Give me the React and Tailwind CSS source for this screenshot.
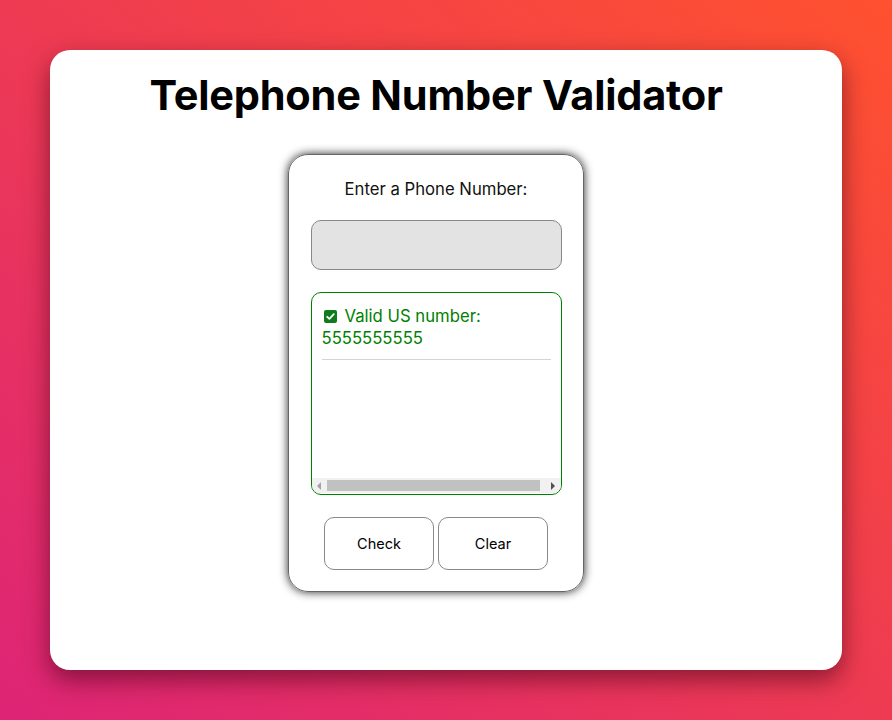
import React from "react";

export default function App() {
  return (
    <div
      className="w-[892px] h-[720px] bg-[linear-gradient(to_top_right,#DD2476,#FF512F)] pt-[50px] px-[50px]"
      style={{ fontFamily: "Inter, 'Noto Sans', sans-serif" }}
    >
      <div className="h-[620px] bg-white rounded-[20px] shadow-[0_10px_25px_rgba(60,0,20,0.55)] flex flex-col items-center pr-[20px]">
        <h1 className="mt-[20px] text-[41.5px] font-bold leading-[50px] text-black tracking-[-0.2px]">
          Telephone Number Validator
        </h1>
        <div className="mt-[34px] w-[296px] h-[438px] rounded-[20px] border border-[#666] shadow-[0_0_10px_rgba(0,0,0,0.85)] flex flex-col items-center">
          <label className="mt-[24px] text-[16.7px] leading-[20px] text-[#111]">
            Enter a Phone Number:
          </label>
          <input
            className="mt-[21px] w-[251px] h-[50px] bg-[#e3e3e3] border border-[#888] rounded-[10px] outline-none"
          />
          <div className="mt-[22px] w-[251px] h-[203px] border border-[#008000] rounded-[10px] flex flex-col overflow-hidden">
            <div className="flex-1 pt-[12px] px-[10px]">
              <div className="text-[16.7px] leading-[22px] text-[#008000]">
                <span className="inline-flex align-[-1px] mr-[8px] ml-[2px]">
                  <svg width="13" height="13" viewBox="0 0 13 13">
                    <rect x="0" y="0" width="13" height="13" rx="2" fill="#0f7a1e" />
                    <path d="M3.2 6.8 L5.4 8.8 L9.8 4.2" stroke="white" strokeWidth="1.8" fill="none" strokeLinecap="round" strokeLinejoin="round" />
                  </svg>
                </span>
                Valid US number:
                <br />
                5555555555
              </div>
              <div className="mt-[10px] h-px bg-[#d4d4d4]" />
            </div>
            <div className="h-[15px] bg-[#f1f1f1] flex items-center mb-[1px]">
              <div className="w-[15px] h-[15px] flex items-center justify-center">
                <svg width="6" height="8" viewBox="0 0 6 8">
                  <path d="M5 0 L1 4 L5 8 Z" fill="#a3a3a3" />
                </svg>
              </div>
              <div className="flex-1 h-[11px] bg-[#c1c1c1]" />
              <div className="w-[15px] h-[15px] flex items-center justify-center ml-[6px]">
                <svg width="6" height="8" viewBox="0 0 6 8">
                  <path d="M1 0 L5 4 L1 8 Z" fill="#505050" />
                </svg>
              </div>
            </div>
          </div>
          <div className="mt-[22px] flex gap-[4px]">
            <button className="w-[110px] h-[53px] rounded-[10px] border border-[#888] bg-white text-[14.5px] text-black">
              Check
            </button>
            <button className="w-[110px] h-[53px] rounded-[10px] border border-[#888] bg-white text-[14.5px] text-black">
              Clear
            </button>
          </div>
        </div>
      </div>
    </div>
  );
}
